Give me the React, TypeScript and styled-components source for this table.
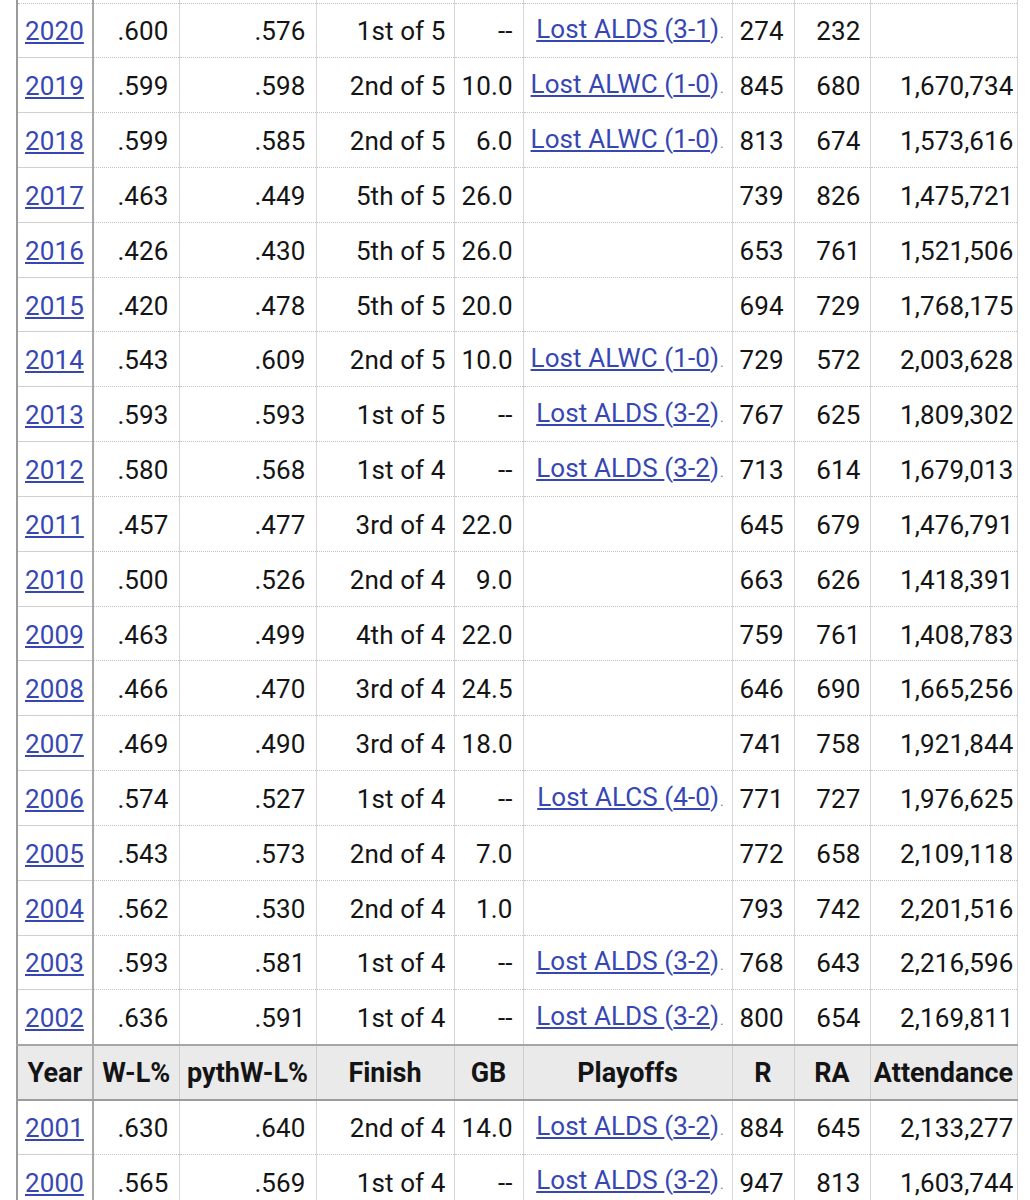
import React from "react";
import styled, { createGlobalStyle, css } from "styled-components";

const GlobalStyle = createGlobalStyle`
  html, body { margin: 0; padding: 0; background: #ffffff; }
  body { font-family: Roboto, "Noto Sans", "Liberation Sans", sans-serif; color: #111; }
`;

type Row = {
  year: string;
  wl: string;
  pyth: string;
  finish: string;
  gb: string;
  playoff?: [string, string];
  r: string;
  ra: string;
  att: string;
};

const upper: Row[] = [
  { year: "2020", wl: ".600", pyth: ".576", finish: "1st of 5", gb: "--", playoff: ["Lost ALDS", "3-1"], r: "274", ra: "232", att: "" },
  { year: "2019", wl: ".599", pyth: ".598", finish: "2nd of 5", gb: "10.0", playoff: ["Lost ALWC", "1-0"], r: "845", ra: "680", att: "1,670,734" },
  { year: "2018", wl: ".599", pyth: ".585", finish: "2nd of 5", gb: "6.0", playoff: ["Lost ALWC", "1-0"], r: "813", ra: "674", att: "1,573,616" },
  { year: "2017", wl: ".463", pyth: ".449", finish: "5th of 5", gb: "26.0", r: "739", ra: "826", att: "1,475,721" },
  { year: "2016", wl: ".426", pyth: ".430", finish: "5th of 5", gb: "26.0", r: "653", ra: "761", att: "1,521,506" },
  { year: "2015", wl: ".420", pyth: ".478", finish: "5th of 5", gb: "20.0", r: "694", ra: "729", att: "1,768,175" },
  { year: "2014", wl: ".543", pyth: ".609", finish: "2nd of 5", gb: "10.0", playoff: ["Lost ALWC", "1-0"], r: "729", ra: "572", att: "2,003,628" },
  { year: "2013", wl: ".593", pyth: ".593", finish: "1st of 5", gb: "--", playoff: ["Lost ALDS", "3-2"], r: "767", ra: "625", att: "1,809,302" },
  { year: "2012", wl: ".580", pyth: ".568", finish: "1st of 4", gb: "--", playoff: ["Lost ALDS", "3-2"], r: "713", ra: "614", att: "1,679,013" },
  { year: "2011", wl: ".457", pyth: ".477", finish: "3rd of 4", gb: "22.0", r: "645", ra: "679", att: "1,476,791" },
  { year: "2010", wl: ".500", pyth: ".526", finish: "2nd of 4", gb: "9.0", r: "663", ra: "626", att: "1,418,391" },
  { year: "2009", wl: ".463", pyth: ".499", finish: "4th of 4", gb: "22.0", r: "759", ra: "761", att: "1,408,783" },
  { year: "2008", wl: ".466", pyth: ".470", finish: "3rd of 4", gb: "24.5", r: "646", ra: "690", att: "1,665,256" },
  { year: "2007", wl: ".469", pyth: ".490", finish: "3rd of 4", gb: "18.0", r: "741", ra: "758", att: "1,921,844" },
  { year: "2006", wl: ".574", pyth: ".527", finish: "1st of 4", gb: "--", playoff: ["Lost ALCS", "4-0"], r: "771", ra: "727", att: "1,976,625" },
  { year: "2005", wl: ".543", pyth: ".573", finish: "2nd of 4", gb: "7.0", r: "772", ra: "658", att: "2,109,118" },
  { year: "2004", wl: ".562", pyth: ".530", finish: "2nd of 4", gb: "1.0", r: "793", ra: "742", att: "2,201,516" },
  { year: "2003", wl: ".593", pyth: ".581", finish: "1st of 4", gb: "--", playoff: ["Lost ALDS", "3-2"], r: "768", ra: "643", att: "2,216,596" },
  { year: "2002", wl: ".636", pyth: ".591", finish: "1st of 4", gb: "--", playoff: ["Lost ALDS", "3-2"], r: "800", ra: "654", att: "2,169,811" },
];

const lower: Row[] = [
  { year: "2001", wl: ".630", pyth: ".640", finish: "2nd of 4", gb: "14.0", playoff: ["Lost ALDS", "3-2"], r: "884", ra: "645", att: "2,133,277" },
  { year: "2000", wl: ".565", pyth: ".569", finish: "1st of 4", gb: "--", playoff: ["Lost ALDS", "3-2"], r: "947", ra: "813", att: "1,603,744" },
];

const headers = ["Year", "W-L%", "pythW-L%", "Finish", "GB", "Playoffs", "R", "RA", "Attendance"];
const widths = [76, 86, 137, 138, 69, 209, 62, 76, 147];

const Page = styled.div`
  padding: 0 0 0 16px;
  width: 1000px;
`;

const Table = styled.table`
  width: 1000px;
  table-layout: fixed;
  border-collapse: collapse;
  border-left: 2px solid #9a9a9a;
  font-size: 26px;
  line-height: 30px;
`;

const Tr = styled.tr<{ $h: number }>`
  height: ${(p) => p.$h}px;
`;

const Td = styled.td<{ $align?: "left" | "right" | "center"; $year?: boolean; $pr?: number }>`
  padding: 2px ${(p) => (p.$pr ?? 10)}px 0 7px;
  text-align: ${(p) => p.$align ?? "right"};
  white-space: nowrap;
  overflow: hidden;
  vertical-align: middle;
  border-bottom: 1px dotted #c4c4c4;
  border-right: 1px solid #d6d6d6;
  color: #141414;
  letter-spacing: 0.1px;
  ${(p) =>
    p.$year &&
    css`
      border-bottom: 1px solid #cfcfcf;
      border-right: 2px solid #a8a8a8;
    `}
`;

const Th = styled.th<{ $first?: boolean }>`
  padding: 2px 1px 0;
  text-align: center;
  white-space: nowrap;
  font-size: 27px;
  font-weight: 700;
  color: #141414;
  background: #eaeaea;
  border-top: 2px solid #a6a6a6;
  border-bottom: 2px solid #9c9c9c;
  border-right: 1px solid #cfcfcf;
  overflow: hidden;
  ${(p) =>
    p.$first &&
    css`
      border-right: 2px solid #b0b0b0;
    `}
`;

const Link = styled.a`
  color: #3647b4;
  text-decoration: underline;
  text-decoration-thickness: 1.5px;
  text-underline-offset: 2px;
`;

const Paren = styled.span`
  color: #3647b4;
`;

const Dot = styled.span`
  color: #5060b8;
  font-size: 12px;
  margin-left: 1px;
`;

const Filler = styled.td<{ $year?: boolean }>`
  padding: 0;
  border-bottom: 1px dotted #c4c4c4;
  border-right: ${(p) => (p.$year ? "2px solid #a8a8a8" : "1px solid #d6d6d6")};
`;

function DataRow({ row }: { row: Row }) {
  return (
    <Tr $h={54.84}>
      <Td $align="left" $year>
        <Link href="#">{row.year}</Link>
      </Td>
      <Td>{row.wl}</Td>
      <Td>{row.pyth}</Td>
      <Td $pr={8}>{row.finish}</Td>
      <Td>{row.gb}</Td>
      <Td $pr={8}>
        {row.playoff && (
          <>
            <Link href="#">{row.playoff[0] + " "}</Link>
            <Paren>(</Paren>
            <Link href="#">{row.playoff[1]}</Link>
            <Paren>)</Paren>
            <Dot>.</Dot>
          </>
        )}
      </Td>
      <Td>{row.r}</Td>
      <Td $pr={9}>{row.ra}</Td>
      <Td $pr={3}>{row.att}</Td>
    </Tr>
  );
}

export default function App() {
  return (
    <Page>
      <GlobalStyle />
      <Table>
        <colgroup>
          {widths.map((w, i) => (
            <col key={i} style={{ width: w }} />
          ))}
        </colgroup>
        <tbody>
          <Tr $h={3}>
            {widths.map((_, i) => (
              <Filler key={i} $year={i === 0} />
            ))}
          </Tr>
          {upper.map((r) => (
            <DataRow key={r.year} row={r} />
          ))}
          <Tr $h={55}>
            {headers.map((h, i) => (
              <Th key={h} $first={i === 0}>
                {h}
              </Th>
            ))}
          </Tr>
          {lower.map((r) => (
            <DataRow key={r.year} row={r} />
          ))}
        </tbody>
      </Table>
    </Page>
  );
}
